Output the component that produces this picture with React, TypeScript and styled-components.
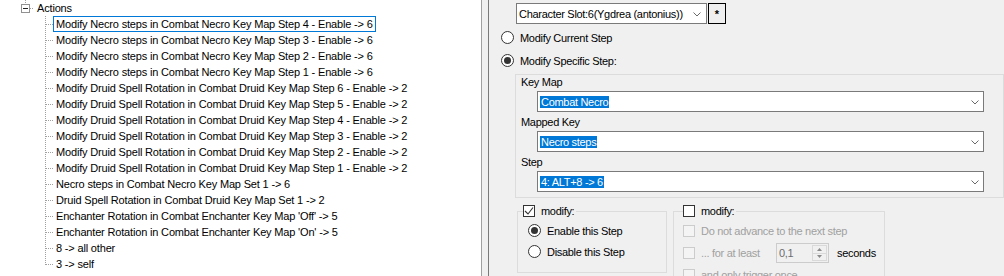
import React from 'react';
import styled, { createGlobalStyle } from 'styled-components';

const GlobalStyle = createGlobalStyle`
  html, body {
    margin: 0;
    padding: 0;
    background: #f0f0f0;
  }
  body {
    font-family: "Liberation Sans", Arial, sans-serif;
    font-size: 11px;
    color: #000;
  }
  * {
    box-sizing: border-box;
  }
`;

const Window = styled.div`
  display: flex;
  width: 1004px;
  height: 276px;
  overflow: hidden;
  letter-spacing: -0.3px;
`;

/* ---------- tree ---------- */

const TreePane = styled.div`
  width: 482px;
  flex: none;
  background: #fff;
  border-right: 1px solid #a0a0a0;
  overflow: hidden;
  letter-spacing: -0.17px;
`;

const Splitter = styled.div`
  width: 7px;
  flex: none;
  background: #f0f0f0;
  border-right: 1px solid #7a7a7a;
`;

const dots = (dir: 'bottom' | 'right') =>
  `repeating-linear-gradient(to ${dir}, #a0a0a0 0 1px, transparent 1px 2px)`;

const TreeRow = styled.div`
  display: flex;
  height: 16px;
`;

const ExpanderCell = styled.div`
  width: 18px;
  height: 16px;
  margin-left: 16px;
  flex: none;
  padding: 4px 0 0 5px;
  background:
    ${dots('bottom')} 9px 0 / 1px 4px no-repeat,
    ${dots('right')} 14px 8px / 4px 1px no-repeat;
`;

const ExpanderBox = styled.div`
  width: 9px;
  height: 9px;
  border: 1px solid #919191;
  background: #fff;
  display: flex;
  align-items: center;
  justify-content: center;

  &::after {
    content: '';
    width: 5px;
    height: 1px;
    background: #222;
  }
`;

const ChildList = styled.div`
  padding-left: 45px;
`;

const Connector = styled.div<{ $last?: boolean }>`
  width: 8px;
  height: 16px;
  flex: none;
  background:
    ${dots('bottom')} 0 0 / 1px ${p => (p.$last ? '9px' : '16px')} no-repeat,
    ${dots('right')} 1px 8px / 7px 1px no-repeat;
`;

const NodeLabel = styled.span<{ $selected?: boolean }>`
  display: inline-block;
  height: 16px;
  line-height: 14px;
  padding: 0 2px;
  white-space: nowrap;
  border: 1px solid ${p => (p.$selected ? '#0078d7' : 'transparent')};
`;

/* ---------- form ---------- */

const Form = styled.div`
  flex: 1;
  min-width: 0;
  display: flex;
  flex-direction: column;
  padding-top: 3px;
  background: #f0f0f0;
`;

const SlotRow = styled.div`
  display: flex;
  gap: 1px;
  margin-left: 27px;
`;

const Combo = styled.div<{ $width: number }>`
  width: ${p => p.$width}px;
  height: 21px;
  flex: none;
  display: flex;
  align-items: center;
  padding: 0 5px 0 2px;
  background: #fff;
  border: 1px solid #7a7a7a;
`;

const ComboText = styled.span`
  flex: 1;
  white-space: nowrap;
  overflow: hidden;
`;

const Highlight = styled.span`
  padding: 1px 1px;
  line-height: 12px;
  background: #0078d7;
  color: #fff;
`;

const ChevronIcon = styled.svg`
  flex: none;
  margin-top: 2px;
`;

const Chevron = () => (
  <ChevronIcon width="8" height="5" viewBox="0 0 8 5">
    <polyline points="0.5,0.5 4,4 7.5,0.5" fill="none" stroke="#6a6a6a" strokeWidth="1" />
  </ChevronIcon>
);

const StarButton = styled.button`
  width: 18px;
  height: 21px;
  padding: 0;
  border: 1px solid #000;
  background: #efefef;
  font: bold 11px "Liberation Sans", Arial, sans-serif;
  color: #000;
`;

const RadioRow = styled.label<{ $indent?: number; $height?: number }>`
  display: flex;
  align-items: center;
  gap: 6px;
  height: ${p => p.$height ?? 23}px;
  padding-left: ${p => p.$indent ?? 0}px;
  white-space: nowrap;
`;

const TopRadios = styled.div`
  margin-top: 2px;
`;

const RadioCircle = styled.span<{ $checked?: boolean }>`
  width: 13px;
  height: 13px;
  flex: none;
  border-radius: 50%;
  border: 1px solid #333;
  background: #fff;
  display: flex;
  align-items: center;
  justify-content: center;

  &::after {
    content: '';
    width: 7px;
    height: 7px;
    border-radius: 50%;
    background: ${p => (p.$checked ? '#333' : 'transparent')};
  }
`;

const StepPanel = styled.div`
  margin: 2px 0 0 26px;
  border: 1px solid #dcdcdc;
  padding: 0 19px 5px 5px;
  display: flex;
  flex-direction: column;
  gap: 3px;
`;

const Field = styled.div`
  display: flex;
  flex-direction: column;
  gap: 2px;
`;

const FieldLabel = styled.span`
  height: 14px;
  line-height: 14px;
`;

const FieldCombo = styled(Combo)`
  margin-left: 16px;
  padding-right: 4px;
`;

const Groups = styled.div`
  display: flex;
  gap: 6px;
  margin: 6px 0 0 28px;
  align-items: flex-start;
`;

const GroupBox = styled.fieldset<{ $width: number; $pad: number }>`
  width: ${p => p.$width}px;
  min-width: 0;
  margin: 0;
  padding: 2px 0 10px ${p => p.$pad}px;
  border: 1px solid #dcdcdc;
`;

const Legend = styled.legend`
  padding: 0 2px 0 0;
  height: 14px;
`;

const LegendInner = styled.span`
  display: inline-flex;
  align-items: center;
  gap: 6px;
  height: 14px;
  line-height: 14px;
`;

const CheckBox = styled.span<{ $disabled?: boolean }>`
  width: 12px;
  height: 12px;
  flex: none;
  display: flex;
  align-items: center;
  justify-content: center;
  border: 1px solid ${p => (p.$disabled ? '#cccccc' : '#333')};
  background: ${p => (p.$disabled ? '#f4f4f4' : '#fff')};
`;

const RadioList = styled.div`
  margin-left: 5px;
`;

const OptionRow = styled.div`
  display: flex;
  align-items: center;
  gap: 6px;
  height: 22px;
  white-space: nowrap;
`;

const OptionText = styled.span<{ $disabled?: boolean; $width?: number }>`
  color: ${p => (p.$disabled ? '#a0a0a0' : '#000')};
  ${p => (p.$width ? `width: ${p.$width}px; flex: none;` : '')}
`;

const Numeric = styled.div`
  width: 53px;
  height: 20px;
  flex: none;
  display: flex;
  align-items: center;
  border: 1px solid #cccccc;
  background: #f0f0f0;
  padding: 1px 1px 1px 2px;
  margin-right: 2px;
`;

const NumericValue = styled.span`
  flex: 1;
  color: #6d6d6d;
`;

const Spinner = styled.div`
  width: 15px;
  height: 16px;
  display: flex;
  flex-direction: column;
`;

const SpinButton = styled.div`
  flex: 1;
  display: flex;
  align-items: center;
  justify-content: center;
  border: 1px solid #d9d9d9;
  background: #f0f0f0;

  & + & {
    border-top: none;
  }
`;

const CheckMark = () => (
  <svg width="10" height="10" viewBox="0 0 10 10">
    <polyline points="1,5 4,8 9,1.5" fill="none" stroke="#333" strokeWidth="1.1" />
  </svg>
);

const Arrow = ({ up }: { up?: boolean }) => (
  <svg width="5" height="3" viewBox="0 0 5 3">
    <polygon points={up ? '0,3 5,3 2.5,0' : '0,0 5,0 2.5,3'} fill="#8a8a8a" />
  </svg>
);

const TREE_ITEMS = [
  'Modify Necro steps in Combat Necro Key Map Step 4 - Enable -> 6',
  'Modify Necro steps in Combat Necro Key Map Step 3 - Enable -> 6',
  'Modify Necro steps in Combat Necro Key Map Step 2 - Enable -> 6',
  'Modify Necro steps in Combat Necro Key Map Step 1 - Enable -> 6',
  'Modify Druid Spell Rotation in Combat Druid Key Map Step 6 - Enable -> 2',
  'Modify Druid Spell Rotation in Combat Druid Key Map Step 5 - Enable -> 2',
  'Modify Druid Spell Rotation in Combat Druid Key Map Step 4 - Enable -> 2',
  'Modify Druid Spell Rotation in Combat Druid Key Map Step 3 - Enable -> 2',
  'Modify Druid Spell Rotation in Combat Druid Key Map Step 2 - Enable -> 2',
  'Modify Druid Spell Rotation in Combat Druid Key Map Step 1 - Enable -> 2',
  'Necro steps in Combat Necro Key Map Set 1 -> 6',
  'Druid Spell Rotation in Combat Druid Key Map Set 1 -> 2',
  "Enchanter Rotation in Combat Enchanter Key Map 'Off' -> 5",
  "Enchanter Rotation in Combat Enchanter Key Map 'On' -> 5",
  '8 -> all other',
  '3 -> self',
];

const FIELDS = [
  { label: 'Key Map', value: 'Combat Necro' },
  { label: 'Mapped Key', value: 'Necro steps' },
  { label: 'Step', value: '4: ALT+8 -> 6' },
];

export default function App() {
  return (
    <>
      <GlobalStyle />
      <Window>
        <TreePane>
          <TreeRow>
            <ExpanderCell>
              <ExpanderBox />
            </ExpanderCell>
            <NodeLabel>Actions</NodeLabel>
          </TreeRow>
          <ChildList>
            {TREE_ITEMS.map((item, i) => (
              <TreeRow key={i}>
                <Connector $last={i === TREE_ITEMS.length - 1} />
                <NodeLabel $selected={i === 0}>{item}</NodeLabel>
              </TreeRow>
            ))}
          </ChildList>
        </TreePane>
        <Splitter />
        <Form>
          <SlotRow>
            <Combo $width={191}>
              <ComboText>Character Slot:6(Ygdrea (antonius))</ComboText>
              <Chevron />
            </Combo>
            <StarButton>*</StarButton>
          </SlotRow>
          <TopRadios>
            <RadioRow $indent={12}>
              <RadioCircle />
              Modify Current Step
            </RadioRow>
            <RadioRow $indent={12}>
              <RadioCircle $checked />
              Modify Specific Step:
            </RadioRow>
          </TopRadios>
          <StepPanel>
            {FIELDS.map(f => (
              <Field key={f.label}>
                <FieldLabel>{f.label}</FieldLabel>
                <FieldCombo $width={447}>
                  <ComboText>
                    <Highlight>{f.value}</Highlight>
                  </ComboText>
                  <Chevron />
                </FieldCombo>
              </Field>
            ))}
          </StepPanel>
          <Groups>
            <GroupBox $width={150} $pad={5}>
              <Legend>
                <LegendInner>
                  <CheckBox>
                    <CheckMark />
                  </CheckBox>
                  modify:
                </LegendInner>
              </Legend>
              <RadioList>
                <RadioRow $height={21}>
                  <RadioCircle $checked />
                  Enable this Step
                </RadioRow>
                <RadioRow $height={21}>
                  <RadioCircle />
                  Disable this Step
                </RadioRow>
              </RadioList>
            </GroupBox>
            <GroupBox $width={212} $pad={9}>
              <Legend>
                <LegendInner>
                  <CheckBox />
                  modify:
                </LegendInner>
              </Legend>
              <OptionRow>
                <CheckBox $disabled />
                <OptionText $disabled>Do not advance to the next step</OptionText>
              </OptionRow>
              <OptionRow>
                <CheckBox $disabled />
                <OptionText $disabled $width={69}>... for at least</OptionText>
                <Numeric>
                  <NumericValue>0,1</NumericValue>
                  <Spinner>
                    <SpinButton>
                      <Arrow up />
                    </SpinButton>
                    <SpinButton>
                      <Arrow />
                    </SpinButton>
                  </Spinner>
                </Numeric>
                <OptionText>seconds</OptionText>
              </OptionRow>
              <OptionRow>
                <CheckBox $disabled />
                <OptionText $disabled>and only trigger once</OptionText>
              </OptionRow>
            </GroupBox>
          </Groups>
        </Form>
      </Window>
    </>
  );
}
